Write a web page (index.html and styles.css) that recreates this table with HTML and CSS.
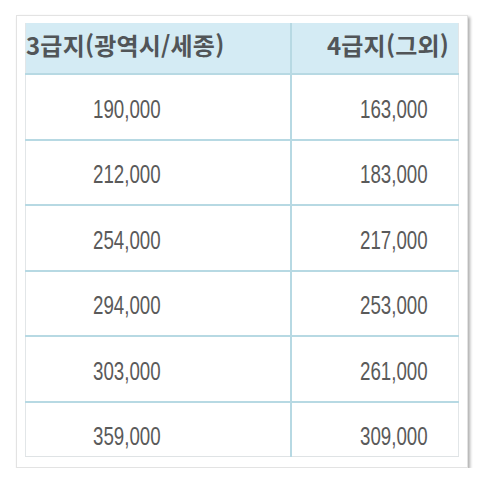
FILE: index.html
```html
<!DOCTYPE html>
<html lang="ko">
<head>
<meta charset="utf-8">
<link rel="stylesheet" href="styles.css">
</head>
<body>
<div class="card">
  <table class="grid">
    <thead>
      <tr>
        <th class="c1">3급지(광역시/세종)</th>
        <th class="c2">4급지(그외)</th>
      </tr>
    </thead>
    <tbody>
      <tr><td class="c1"><span class="num">190,000</span></td><td class="c2"><span class="num">163,000</span></td></tr>
      <tr><td class="c1"><span class="num">212,000</span></td><td class="c2"><span class="num">183,000</span></td></tr>
      <tr><td class="c1"><span class="num">254,000</span></td><td class="c2"><span class="num">217,000</span></td></tr>
      <tr><td class="c1"><span class="num">294,000</span></td><td class="c2"><span class="num">253,000</span></td></tr>
      <tr><td class="c1"><span class="num">303,000</span></td><td class="c2"><span class="num">261,000</span></td></tr>
      <tr class="last"><td class="c1"><span class="num">359,000</span></td><td class="c2"><span class="num">309,000</span></td></tr>
    </tbody>
  </table>
</div>
</body>
</html>
```

FILE: styles.css
```css
html, body {
  margin: 0;
  padding: 0;
  background: #ffffff;
}

.card {
  box-sizing: border-box;
  margin: 15px 0 0 16px;
  width: 452px;
  height: 453px;
  padding: 7px 8px 0 8px;
  background: #ffffff;
  border: 1px solid #e3e3e3;
  box-shadow: 2px 2px 3px rgba(0, 0, 0, 0.32);
}

.grid {
  border-collapse: collapse;
  table-layout: fixed;
  width: 434px;
  border-left: 1px solid #e2e6e8;
  border-right: 1px solid #e2e6e8;
  border-bottom: 1px solid #dfe3e5;
}

.grid th {
  height: 43px;
  padding: 0 0 7px 0;
  background: #d4ebf4;
  font-family: "Noto Sans CJK KR", "Noto Sans", sans-serif;
  font-weight: 700;
  font-size: 24px;
  line-height: 30px;
  color: #515558;
  border-bottom: 2px solid #b7d9e3;
  vertical-align: middle;
  white-space: nowrap;
  overflow: hidden;
}

.grid th.c1 {
  width: 264px;
  text-align: left;
  padding-left: 0;
  letter-spacing: 0.2px;
}

.grid th.c2 {
  text-align: right;
  padding-right: 9px;
  letter-spacing: 0.2px;
}

.grid th + th,
.grid td + td {
  border-left: 2px solid #b7d9e3;
}

.grid td {
  height: 59.5px;
  padding: 4px 0 0 0;
  border-bottom: 2px solid #b7d9e3;
  vertical-align: middle;
  white-space: nowrap;
}

.grid tr.last td {
  height: 55px;
  padding-top: 14px;
  border-bottom: none;
  box-sizing: border-box;
}

.grid td.c1 {
  padding-left: 67px;
}

.grid td.c2 {
  padding-left: 68px;
}

.num {
  display: inline-block;
  font-family: "Liberation Sans", Arial, sans-serif;
  font-size: 26px;
  line-height: 26px;
  color: #5a5a5a;
  transform: scaleX(0.72);
  transform-origin: left center;
}
```
